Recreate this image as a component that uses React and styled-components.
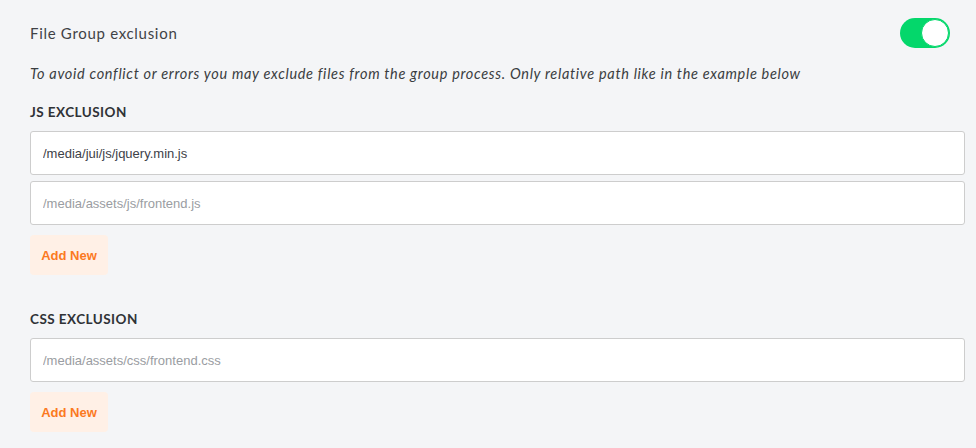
import React, { useState } from 'react';
import styled, { createGlobalStyle } from 'styled-components';

const GlobalStyle = createGlobalStyle`
  body {
    margin: 0;
    background: #f4f5f7;
    font-family: Lato, "Noto Sans", sans-serif;
  }
`;

const Page = styled.div`
  padding: 17px 11px 20px 30px;
`;

const Header = styled.div`
  display: flex;
  align-items: center;
  justify-content: space-between;
  padding-right: 15px;
  height: 32px;
`;

const Title = styled.h3`
  margin: 0;
  font-size: 15px;
  font-weight: 400;
  color: #3f4246;
  letter-spacing: 0.7px;
`;

const Toggle = styled.button`
  position: relative;
  width: 50px;
  height: 30px;
  border: none;
  border-radius: 15px;
  background: ${p => (p.on ? '#04d76b' : '#c9ccd1')};
  padding: 0;
  cursor: pointer;
`;

const Knob = styled.span`
  position: absolute;
  top: 1px;
  left: ${p => (p.on ? '21px' : '1px')};
  width: 26px;
  height: 26px;
  border-radius: 50%;
  background: #fff;
  border: 1px solid #04d76b;
`;

const Hint = styled.p`
  margin: 16px 0 0;
  font-size: 14.5px;
  line-height: 18px;
  font-style: italic;
  color: #3a3d41;
  letter-spacing: 0.68px;
  white-space: nowrap;
`;

const Section = styled.div`
  margin-top: ${p => p.top}px;
`;

const Label = styled.h4`
  margin: 0 0 11px;
  font-size: 13.5px;
  line-height: 16px;
  font-weight: 700;
  color: #2f3236;
  text-transform: uppercase;
  letter-spacing: 0.45px;
`;

const Fields = styled.div`
  display: flex;
  flex-direction: column;
  gap: 6px;
`;

const Input = styled.input`
  box-sizing: border-box;
  width: 100%;
  height: 44px;
  padding: 0 12px;
  border: 1px solid #cdcdcd;
  border-radius: 3px;
  background: #fff;
  font-family: "Liberation Sans", Arial, sans-serif;
  font-size: 13px;
  color: #3d4148;
  outline: none;
  &::placeholder {
    color: #9a9da2;
  }
`;

const AddButton = styled.button`
  margin-top: 10px;
  height: 40px;
  width: 78px;
  border: none;
  border-radius: 4px;
  background: #fff0e6;
  color: #fb7a1f;
  font-family: "Liberation Sans", Arial, sans-serif;
  font-size: 13px;
  font-weight: 700;
  cursor: pointer;
`;

export default function App() {
  const [on, setOn] = useState(true);
  return (
    <Page>
      <GlobalStyle />
      <Header>
        <Title>File Group exclusion</Title>
        <Toggle on={on ? 1 : 0} onClick={() => setOn(!on)}>
          <Knob on={on ? 1 : 0} />
        </Toggle>
      </Header>
      <Hint>
        To avoid conflict or errors you may exclude files from the group process. Only relative path like in the example below
      </Hint>
      <Section top={21}>
        <Label>JS Exclusion</Label>
        <Fields>
          <Input defaultValue="/media/jui/js/jquery.min.js" />
          <Input placeholder="/media/assets/js/frontend.js" />
        </Fields>
        <AddButton>Add New</AddButton>
      </Section>
      <Section top={36}>
        <Label>CSS Exclusion</Label>
        <Fields>
          <Input placeholder="/media/assets/css/frontend.css" />
        </Fields>
        <AddButton>Add New</AddButton>
      </Section>
    </Page>
  );
}
